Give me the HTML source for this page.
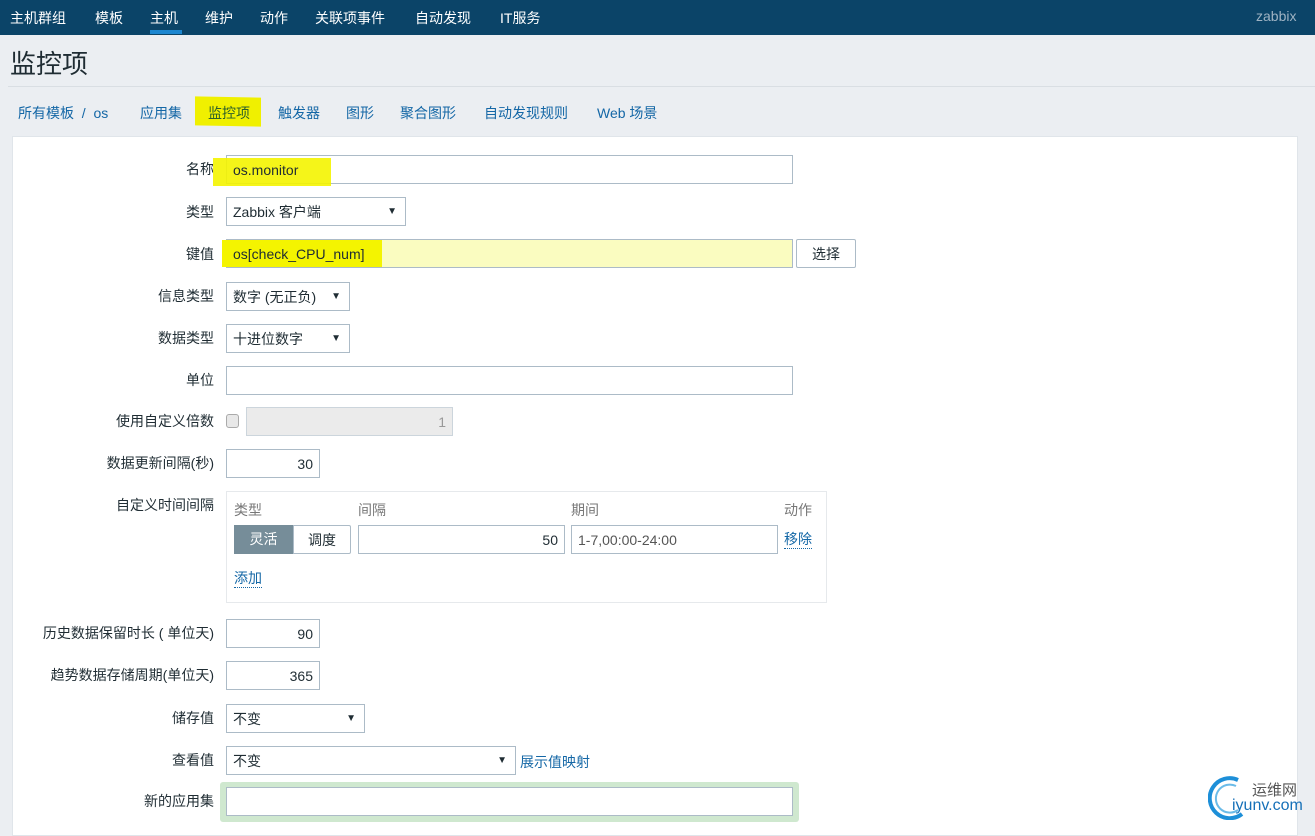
<!DOCTYPE html><html><head><meta charset="utf-8"><style>
*{margin:0;padding:0;box-sizing:border-box}
body{width:1315px;height:823px;overflow:hidden;background:#ebeef2;font-family:"Liberation Sans","Noto Sans CJK SC",sans-serif;font-size:14px;color:#1f2c33;position:relative}
.a{position:absolute}
.nav{left:0;top:0;width:1315px;height:35px;background:#0b4468}
.nav span{position:absolute;top:8px;color:#fff;font-size:14px}
.lbl{position:absolute;right:1101px;font-size:14px;color:#1f2c33;white-space:nowrap;margin-top:-2px}
.in{position:absolute;border:1px solid #acbbc7;background:#fff;height:29px;padding:0 6px;line-height:28px;font-size:14px;white-space:nowrap}
.sel::after{content:"▼";position:absolute;right:8px;top:0;font-size:10px}
.r{text-align:right}
.lk{color:#1467a6}
.bc span{position:absolute;top:103px;color:#1467a6;font-size:14px}
</style></head><body>
<div class="a nav">
<span style="left:10px">主机群组</span><span style="left:95px">模板</span><span style="left:150px">主机</span><span style="left:205px">维护</span><span style="left:260px">动作</span><span style="left:315px">关联项事件</span><span style="left:415px">自动发现</span><span style="left:500px">IT服务</span>
<span style="left:1256px;color:#9fb3c3">zabbix</span>
<div class="a" style="left:150px;top:30px;width:32px;height:4px;background:#1c86d0"></div>
</div>
<div class="a" style="left:10px;top:44px;font-size:26px;color:#1f2c33">监控项</div>
<div class="a" style="left:8px;top:86px;width:1307px;height:1px;background:#d9dee3"></div>
<div class="a" style="left:195px;top:97px;width:66px;height:29px;background:#f0f000;transform:skewY(1deg)"></div>
<div class="bc">
<span style="left:18px">所有模板 &nbsp;/ &nbsp;os</span><span style="left:140px">应用集</span><span style="left:208px;color:#2b5e2b">监控项</span><span style="left:278px">触发器</span><span style="left:346px">图形</span><span style="left:400px">聚合图形</span><span style="left:484px">自动发现规则</span><span style="left:597px">Web 场景</span>
</div>
<div class="a" style="left:12px;top:136px;width:1286px;height:700px;background:#fff;border:1px solid #e0e5ea"></div>

<div class="lbl" style="top:161px">名称</div>
<div class="in" style="left:226px;top:155px;width:567px"></div>
<div class="a" style="left:213px;top:158px;width:118px;height:28px;background:#f4f400;opacity:.9"></div>
<div class="a" style="left:233px;top:162px">os.monitor</div>

<div class="lbl" style="top:204px">类型</div>
<div class="in sel" style="left:226px;top:197px;width:180px">Zabbix 客户端</div>

<div class="lbl" style="top:246px">键值</div>
<div class="in" style="left:226px;top:239px;width:567px;background:#fafcc0"></div>
<div class="a" style="left:222px;top:240px;width:160px;height:27px;background:#f4f400"></div>
<div class="a" style="left:233px;top:246px">os[check_CPU_num]</div>
<div class="in" style="left:796px;top:239px;width:60px;border-radius:2px;text-align:center">选择</div>

<div class="lbl" style="top:288px">信息类型</div>
<div class="in sel" style="left:226px;top:282px;width:124px">数字 (无正负)</div>
<div class="lbl" style="top:330px">数据类型</div>
<div class="in sel" style="left:226px;top:324px;width:124px">十进位数字</div>
<div class="lbl" style="top:372px">单位</div>
<div class="in" style="left:226px;top:366px;width:567px"></div>
<div class="lbl" style="top:413px">使用自定义倍数</div>
<div class="a" style="left:226px;top:414px;width:13px;height:14px;border:1px solid #aaa;border-radius:3px;background:#e8e8e8"></div>
<div class="in r" style="left:246px;top:407px;width:207px;background:#ebebeb;color:#999;border-color:#ccd5dc">1</div>
<div class="lbl" style="top:455px">数据更新间隔(秒)</div>
<div class="in r" style="left:226px;top:449px;width:94px">30</div>

<div class="lbl" style="top:497px">自定义时间间隔</div>
<div class="a" style="left:226px;top:491px;width:601px;height:112px;border:1px solid #e6e9ec"></div>
<div class="a" style="left:234px;top:500px;color:#777">类型</div>
<div class="a" style="left:358px;top:500px;color:#777">间隔</div>
<div class="a" style="left:571px;top:500px;color:#777">期间</div>
<div class="a" style="left:784px;top:500px;color:#777">动作</div>
<div class="a" style="left:234px;top:525px;width:59px;height:29px;background:#768d99;color:#fff;text-align:center;line-height:29px">灵活</div>
<div class="in" style="left:293px;top:525px;width:58px;text-align:center;border-radius:0 2px 2px 0">调度</div>
<div class="in r" style="left:358px;top:525px;width:207px">50</div>
<div class="in" style="left:571px;top:525px;width:207px;color:#555">1-7,00:00-24:00</div>
<div class="a lk" style="left:784px;top:531px;border-bottom:1px dotted #1467a6;line-height:17px">移除</div>
<div class="a lk" style="left:234px;top:570px;border-bottom:1px dotted #1467a6;line-height:17px">添加</div>

<div class="lbl" style="top:625px">历史数据保留时长 ( 单位天)</div>
<div class="in r" style="left:226px;top:619px;width:94px">90</div>
<div class="lbl" style="top:667px">趋势数据存储周期(单位天)</div>
<div class="in r" style="left:226px;top:661px;width:94px">365</div>
<div class="lbl" style="top:710px">储存值</div>
<div class="in sel" style="left:226px;top:704px;width:139px">不变</div>
<div class="lbl" style="top:752px">查看值</div>
<div class="in sel" style="left:226px;top:746px;width:290px">不变</div>
<div class="a lk" style="left:520px;top:752px">展示值映射</div>
<div class="lbl" style="top:793px">新的应用集</div>
<div class="a" style="left:220px;top:782px;width:579px;height:40px;background:#cfe8cf;border-radius:3px"></div>
<div class="in" style="left:226px;top:787px;width:567px"></div>

<svg class="a" style="left:1208px;top:774px" width="40" height="46" viewBox="0 0 40 46"><path d="M30 6 A20 20 0 1 0 34 40" fill="none" stroke="#1d8fd8" stroke-width="4"/><path d="M28 12 A14 14 0 1 0 30 36" fill="none" stroke="#6bbbe8" stroke-width="2"/></svg>
<div class="a" style="left:1252px;top:779px;font-size:15px;color:#555">运维网</div>
<div class="a" style="left:1232px;top:797px;font-size:16px;color:#1670b8">iyunv.com</div>
</body></html>
